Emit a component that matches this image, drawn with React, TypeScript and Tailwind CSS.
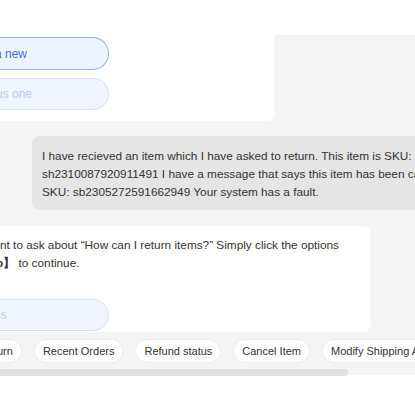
import React from "react";

const chips = ["Recent Orders", "Refund status", "Cancel Item", "Modify Shipping Address"];

const App: React.FC = () => {
  return (
    <div className="w-[415px] h-[415px] overflow-hidden bg-white font-['Liberation_Sans',Arial,sans-serif] text-[#333]">
      {/* Chat area */}
      <div className="bg-[#f4f4f4] h-[375px] flex flex-col">
        <div className="h-[35px] bg-white shrink-0" />

        {/* Bot card with option buttons */}
        <div className="w-[275px] h-[86px] bg-white rounded-br-lg shrink-0 flex flex-col gap-[8px] pt-[2px]">
          <button className="w-[109px] h-[33px] bg-[#eef4ff] border border-l-0 border-[#8eaee6] rounded-r-full text-left text-[12px] text-[#4372d6] -indent-[5px] whitespace-nowrap overflow-hidden">
            a new
          </button>
          <button className="w-[109px] h-[32px] bg-[#f0f5ff] border border-l-0 border-[#d8e3f8] rounded-r-full text-left text-[12px] text-[#bccbee] -indent-[4px] whitespace-nowrap overflow-hidden">
            us one
          </button>
        </div>

        {/* User message */}
        <div className="ml-[32px] mt-[15px] w-[420px] shrink-0 bg-[#e5e5e5] rounded-lg pl-[10px] pt-[11px] pb-[8px] text-[11.8px] leading-[18px] whitespace-nowrap shadow-[0_1px_2px_rgba(0,0,0,0.04)]">
          I have recieved an item which I have asked to return. This item is SKU:
          <br />
          sh2310087920911491 I have a message that says this item has been cancelled
          <br />
          SKU: sb2305272591662949 Your system has a fault.
        </div>

        {/* Bot reply card */}
        <div className="mt-[17px] w-[371px] h-[106px] shrink-0 bg-white rounded-r-lg pt-[10px] text-[11.8px] leading-[18px] whitespace-nowrap flex flex-col">
          <p>nt to ask about “How can I return items?” Simply click the options</p>
          <p>
            <span className="-ml-[4px] font-bold">o】</span> to continue.
          </p>
          <button className="mt-[27px] w-[109px] h-[32px] bg-[#f0f5ff] border border-l-0 border-[#d8e3f8] rounded-r-full text-left text-[12px] text-[#bccbee] -indent-[6px] overflow-hidden">
            es
          </button>
        </div>

        {/* Quick replies */}
        <div className="flex flex-col shrink-0 pt-[7px]">
          <div className="flex gap-[12px] whitespace-nowrap text-[11px]">
            <span className="h-[24px] flex items-center bg-white border border-l-0 border-[#ececec] rounded-r-full pr-[8px] -ml-[3px] shrink-0">
              urn
            </span>
            {chips.map((c) => (
              <span
                key={c}
                className="h-[24px] flex items-center bg-white border border-[#ececec] rounded-full px-[8px] shrink-0"
              >
                {c}
              </span>
            ))}
          </div>
          <div className="mt-[6px] h-[7px] w-[348px] bg-[#e1e1e1] rounded-r-full" />
        </div>
      </div>
    </div>
  );
};

export default App;
